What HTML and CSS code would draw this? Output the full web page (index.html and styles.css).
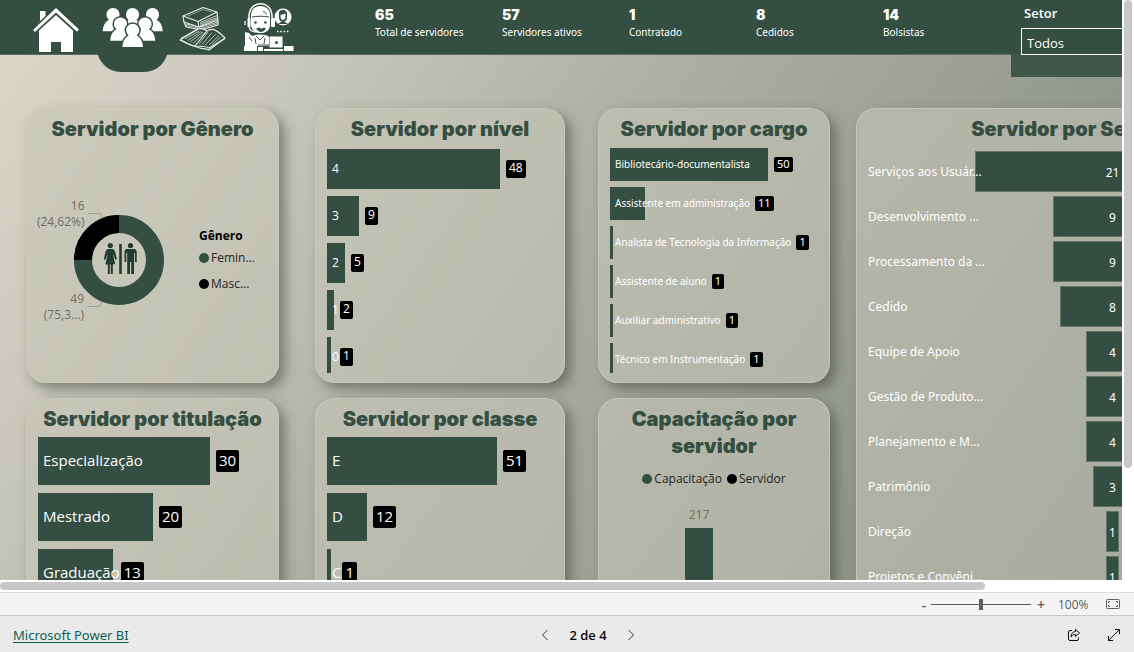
FILE: index.html
```html
<!DOCTYPE html>
<html lang="pt-BR">
<head>
<meta charset="utf-8">
<title>Servidores</title>
<link rel="stylesheet" href="styles.css">
</head>
<body>
<div class="viewport">
  <main class="report">
    <header class="header">
      <nav class="tabs">
        <a class="tab" href="#inicio" aria-label="Início">
          <svg viewBox="28 0 61 54" width="61" height="54"><g fill="#fff"><path d="M33 30 56 8l23 21.500-2 2.200L56 12.500 35 32z"/><path d="M40 11h5.500v5L40 21z"/><path d="M39 30.500 56 15l17 15.500V52H61V42H51v10H39z"/></g></svg>
        </a>
        <a class="tab tab-active" href="#servidores" aria-label="Servidores">
          <svg viewBox="97 0 71 54" width="71" height="54">
            <defs><g id="person"><path d="M-10.300 16.800C-10 11-7.500 7-4 5.300a6.600 6.600 0 1 1 8 0C7.500 7 10 11 10.300 16.800z"/></g></defs>
            <g fill="#fff" stroke="#344e41" stroke-width="3" paint-order="stroke"><use href="#person" x="113" y="14.500"/><use href="#person" x="152.500" y="14.500"/><use href="#person" x="132.500" y="14.500"/><use href="#person" x="120.500" y="24"/><use href="#person" x="145" y="24"/><use href="#person" x="132.700" y="30.200"/></g></svg>
        </a>
        <a class="tab" href="#acervo" aria-label="Acervo">
          <svg viewBox="176 0 58 54" width="58" height="54">
            <g fill="#344e41" stroke="#e6ebe8" stroke-width="1.200" stroke-linejoin="round">
              <path d="M184 22l2 5 15 3 17-5v-4l-16-4z"/><path d="M186 24l15 3 17-5M186 25.500l15 3 17-5" fill="none" stroke-width=".8"/>
              <path d="M183 16 203 7.500 217 12l1 8-19 7-15-5z"/><path d="M183 16l15 5.500L217 12M198 21.500l1 5.500" fill="none"/><path d="M200 22.500l17-7M200 24l17-6.500M200 25.500l18-7" fill="none" stroke-width=".8"/><path d="M188 16l15-6.500 9 2.500" fill="none" stroke-width=".5"/>
              <path d="M180 40l18-11c4-1 6 0 9 2 4-3 8-3 18 7l-16 12c-3-2-7-1-9-2-5-1-12-4-20-8z"/>
              <path d="M207 31l-12 15M181 38.500l17-9.500M225 38.500 209 48c-3-2-8-2-14-2-4 0-9-3-14-6" fill="none"/>
              <path d="M185 39l14-8M188 40.500l13-9M190 42l13-10M193 43.500l12-11M199 44l9-12M202 44.500l10-12M205 45l11-11M209 45l10-9.500M212 44.500l9-7.500" fill="none" stroke-width=".7"/>
            </g></svg>
        </a>
        <a class="tab" href="#atendimento" aria-label="Atendimento">
          <svg viewBox="242 0 54 54" width="54" height="54">
            <circle cx="283" cy="17" r="8.500" fill="#fff"/>
            <path d="M279 12c2-3 7-3 8 1v5c0 2-2 4-4 4s-4-2-4-4zM278 24l3-2h4l3 2" fill="#344e41"/><path d="M280.500 15l5-1.500v3c0 2-1 3.500-2.500 3.500s-2.500-1.500-2.500-3.500z" fill="#fff"/>
            <path d="M249 18C248-1 273-1 272 18" fill="none" stroke="#fff" stroke-width="1.500"/>
            <path d="M251 15c0-12 19-12 19 0v10c0 4-3 7-7 8h-5c-4-1-7-4-7-8z" fill="#fff"/>
            <path d="M252 17c4-1 13-1 17 0M263 11.500c2 .5 3 1.500 3.500 3" fill="none" stroke="#344e41"/>
            <circle cx="255.500" cy="22.500" r="1.300" fill="#344e41"/><circle cx="265.500" cy="22.500" r="1.300" fill="#344e41"/>
            <rect x="247.500" y="18" width="3" height="9" rx="1" fill="#fff"/><rect x="271" y="18" width="4" height="9" rx="1" fill="#fff"/>
            <path d="M245 21v4M249 27c1 4 4 5 7 5" fill="none" stroke="#fff" stroke-width="1.200"/>
            <path d="M256 29c2-2 4-2 5 0 2-2 4-1 5-1-1 3-4 4-6 4z" fill="#344e41"/>
            <path d="M245 32l4 1 3 3c4-2 14-2 17 1v9h-24z" fill="#fff"/>
            <path d="M249 37l3 4M256 36l4 4 4-4M255 38l1 6M265 38l-1 6" stroke="#344e41" fill="none"/>
            <rect x="269.500" y="36.500" width="13" height="11" fill="#fff"/><circle cx="276.500" cy="42.500" r="1.500" fill="#344e41"/>
            <path d="M244 46h13v5h-13zM284 46h9.500v5H284zM258 47h5v4h-5zM264 49h19v2h-19z" fill="#fff"/><path d="M258 45h11" stroke="#344e41"/>
            <path d="M277 31.500h12" stroke="#fff" stroke-width="1.500" stroke-dasharray="1.500 1.800"/></svg>
        </a>
      </nav>
      <dl class="kpis">
        <div class="kpi"><dd>65</dd><dt>Total de servidores</dt></div>
        <div class="kpi"><dd>57</dd><dt>Servidores ativos</dt></div>
        <div class="kpi"><dd>1</dd><dt>Contratado</dt></div>
        <div class="kpi"><dd>8</dd><dt>Cedidos</dt></div>
        <div class="kpi"><dd>14</dd><dt>Bolsistas</dt></div>
      </dl>
      <div class="filter">
        <label for="setor">Setor</label>
        <select id="setor"><option>Todos</option></select>
      </div>
    </header>

    <div class="board">
      <div class="column column-a">
        <section class="card">
          <h2>Servidor por Gênero</h2>
          <div class="gender">
            <svg class="donut" viewBox="37 190 130 140" width="130" height="140">
              <g fill="none" stroke-width="18"><circle cx="118" cy="260" r="36" stroke="#344e41"/><path d="M82 260a36 36 0 0 1 36-36" stroke="#000"/></g>
              <g fill="none" stroke="#a09f94"><path d="M87.500 213.500h12l2 5M86 306.500h12l3-5"/></g>
              <g class="donut-text" text-anchor="end"><text x="83.500" y="210">16</text><text x="83.500" y="226">(24,62%)</text><text x="83" y="303">49</text><text x="83" y="319">(75,3...)</text></g>
              <g fill="#213d30"><circle cx="109.300" cy="245.500" r="2.600"/><path d="M106.500 249h5.600l1.800 2 2 8-1.500.8-2.600-6.500 2.400 11h-2.400V274h-2v-9.500h-1V274h-2v-9.500h-2.400l2.400-11-2.600 6.500-1.500-.8 2-8z"/><path d="M118.200 244h2.600v30h-2.600z"/><circle cx="129.500" cy="245.500" r="2.600"/><path d="M125 249h9l1.700 2v11h-1.800v-9h-.9v21h-2.800v-12h-1.200v12h-2.800v-21h-.9v9h-1.800v-11z"/></g>
            </svg>
            <div class="legend">
              <strong>Gênero</strong>
              <span class="key">Femin...</span>
              <span class="key key-black">Masc...</span>
            </div>
          </div>
        </section>
        <section class="card">
          <h2>Servidor por titulação</h2>
          <div class="chart chart-large">
            <div class="row"><div class="lead"><i style="width:172px"></i><span>Especialização</span></div><b>30</b></div>
            <div class="row"><div class="lead"><i style="width:115px"></i><span>Mestrado</span></div><b>20</b></div>
            <div class="row"><div class="lead"><i style="width:75px"></i><span>Graduação</span></div><b>13</b></div>
          </div>
        </section>
      </div>
      <div class="column column-b">
        <section class="card">
          <h2>Servidor por nível</h2>
          <div class="chart chart-medium">
            <div class="row"><div class="lead"><i style="width:173px"></i><span>4</span></div><b>48</b></div>
            <div class="row"><div class="lead"><i style="width:32px"></i><span>3</span></div><b>9</b></div>
            <div class="row"><div class="lead"><i style="width:18px"></i><span>2</span></div><b>5</b></div>
            <div class="row"><div class="lead"><i style="width:7px"></i><span>1</span></div><b>2</b></div>
            <div class="row"><div class="lead"><i style="width:4px"></i><span>0</span></div><b>1</b></div>
          </div>
        </section>
        <section class="card">
          <h2>Servidor por classe</h2>
          <div class="chart chart-large">
            <div class="row"><div class="lead"><i style="width:170px"></i><span>E</span></div><b>51</b></div>
            <div class="row"><div class="lead"><i style="width:40px"></i><span>D</span></div><b>12</b></div>
            <div class="row"><div class="lead"><i style="width:4px"></i><span>C</span></div><b>1</b></div>
          </div>
        </section>
      </div>
      <div class="column column-c">
        <section class="card">
          <h2>Servidor por cargo</h2>
          <div class="chart chart-small">
            <div class="row"><div class="lead"><i style="width:158px"></i><span>Bibliotecário-documentalista</span></div><b>50</b></div>
            <div class="row"><div class="lead"><i style="width:35px"></i><span>Assistente em administração</span></div><b>11</b></div>
            <div class="row"><div class="lead"><i style="width:3px"></i><span>Analista de Tecnologia da Informação</span></div><b>1</b></div>
            <div class="row"><div class="lead"><i style="width:3px"></i><span>Assistente de aluno</span></div><b>1</b></div>
            <div class="row"><div class="lead"><i style="width:3px"></i><span>Auxiliar administrativo</span></div><b>1</b></div>
            <div class="row"><div class="lead"><i style="width:3px"></i><span>Técnico em Instrumentação</span></div><b>1</b></div>
          </div>
        </section>
        <section class="card">
          <h2>Capacitação por servidor</h2>
          <div class="legend-row"><span class="key">Capacitação</span><span class="key key-black">Servidor</span></div>
          <div class="vbar"><span>217</span><i></i></div>
        </section>
      </div>
      <section class="card sector">
        <h2>Servidor por Setor</h2>
        <div class="funnel">
          <div class="step"><span>Serviços aos Usuár...</span><b style="width:275px">21</b></div>
          <div class="step"><span>Desenvolvimento ...</span><b style="width:119px">9</b></div>
          <div class="step"><span>Processamento da ...</span><b style="width:119px">9</b></div>
          <div class="step"><span>Cedido</span><b style="width:105px">8</b></div>
          <div class="step"><span>Equipe de Apoio</span><b style="width:53px">4</b></div>
          <div class="step"><span>Gestão de Produto...</span><b style="width:53px">4</b></div>
          <div class="step"><span>Planejamento e M...</span><b style="width:53px">4</b></div>
          <div class="step"><span>Patrimônio</span><b style="width:40px">3</b></div>
          <div class="step"><span>Direção</span><b style="width:13px">1</b></div>
          <div class="step"><span>Projetos e Convêni...</span><b style="width:13px">1</b></div>
        </div>
      </section>
    </div>
  </main>
  <div class="vscroll"><i></i></div>
  <div class="hscroll"><i></i></div>
</div>
<div class="zoombar">
  <button type="button" aria-label="Reduzir">-</button>
  <input type="range" min="0" max="100" value="50" aria-label="Zoom">
  <button type="button" aria-label="Ampliar">+</button>
  <span class="percent">100%</span>
  <button type="button" class="fit" aria-label="Ajustar à página"><svg viewBox="0 0 14 10" width="14" height="10" fill="none" stroke="#605e5c"><rect x=".5" y=".5" width="13" height="9" rx="1"/><path d="M2.500 4V2.500H4M10 2.500h1.500V4M11.500 6v1.500H10M4 7.500H2.500V6"/></svg></button>
</div>
<footer class="footer">
  <a class="brand" href="#powerbi">Microsoft Power BI</a>
  <div class="pager">
    <button type="button" aria-label="Página anterior"><svg viewBox="0 0 8 12" width="8" height="12"><path d="M6.500 1 1.500 6l5 5" fill="none" stroke="#333"/></svg></button>
    <span>2 de 4</span>
    <button type="button" aria-label="Próxima página"><svg viewBox="0 0 8 12" width="8" height="12"><path d="M1.500 1l5 5-5 5" fill="none" stroke="#333"/></svg></button>
  </div>
  <div class="actions">
    <button type="button" aria-label="Compartilhar"><svg viewBox="0 0 14 14" width="14" height="14" fill="none" stroke="#111" stroke-linejoin="round"><path d="M5 2.500H3A1.500 1.500 0 0 0 1.500 4v7A1.500 1.500 0 0 0 3 12.500h7A1.500 1.500 0 0 0 11.500 11V9.500"/><path d="M8.500 1.500l4 3.500-4 3.500v-2C6 6.500 5 7.500 4 9c0-3 1.500-5.300 4.500-5.500z"/></svg></button>
    <button type="button" aria-label="Tela cheia"><svg viewBox="0 0 14 14" width="14" height="14" fill="none" stroke="#111"><path d="M1.500 12.500l11-11M8 1.500h4.500V6M1.500 8v4.500H6"/></svg></button>
  </div>
</footer>
</body>
</html>
```
FILE: styles.css
```css
* { box-sizing: border-box; }
html, body { height: 100%; }
body {
  margin: 0;
  display: flex;
  flex-direction: column;
  overflow: hidden;
  font-family: "Open Sans", "Noto Sans", sans-serif;
  font-size: 12px;
  background: #fff;
}
button { border: 0; padding: 0; background: none; font: inherit; color: inherit; display: flex; align-items: center; justify-content: center; }
i, b { font-style: normal; font-weight: 400; }
svg { display: block; overflow: visible; }

.viewport {
  flex: 1;
  min-height: 0;
  display: grid;
  grid-template: minmax(0, 1fr) 12px / minmax(0, 1fr) 12px;
  overflow: hidden;
}
.report {
  overflow: hidden;
  display: flex;
  flex-direction: column;
  background: linear-gradient(125deg, #dbd9cc 0%, #c4c3b7 26%, #adaea4 47%, #959a8f 75%, #7d857b 100%);
}
.vscroll, .hscroll { background: #fff; padding: 2px; }
.vscroll { padding-top: 0; }
.hscroll { padding-left: 0; grid-column: 1 / -1; }
.vscroll i, .hscroll i { display: block; border-radius: 4px; background: #c8c8c8; }
.vscroll i { width: 8px; height: 81%; }
.hscroll i { height: 8px; width: 87%; }

.header {
  flex: none;
  height: 55px;
  min-width: 1280px;
  display: flex;
  align-items: flex-start;
  background: #344e41;
  border-bottom: 1px solid #5a7064;
}
.tabs { display: flex; gap: 8px; padding-left: 28px; width: 375px; flex: none; }
.tab { display: block; }
.tab-active { height: 72px; background: #344e41; border-radius: 0 0 24px 24px; }
.kpis { display: flex; margin: 0; width: 636px; flex: none; color: #fff; padding-top: 6px; }
.kpi { width: 127px; display: flex; flex-direction: column; }
.kpi dd { margin: 0; font: 900 14px/18px Inter, sans-serif; }
.kpi dt { font: 10px/16px "Noto Sans", sans-serif; }
.filter {
  flex: 1;
  height: 77px;
  padding: 4px 10px;
  color: #fff;
  background: linear-gradient(#344e41 54px, #40574a 54px);
}
.filter label { display: block; padding-left: 3px; height: 24px; line-height: 19px; font-size: 13px; font-weight: 600; }
.filter select {
  appearance: none;
  display: block;
  width: 100%;
  height: 27px;
  padding: 2px 5px 0;
  border: 1px solid #fff;
  border-radius: 0;
  background: none;
  color: #fff;
  font: 13px "Open Sans", sans-serif;
}

.board { display: flex; flex: none; padding: 53px 10px 10px 26px; min-width: 1280px; align-items: flex-start; }
.column { display: grid; grid-template-rows: 275px 310px; gap: 15px; flex: none; }
.column-a { width: 253px; margin-right: 36px; }
.column-b { width: 250px; margin-right: 33px; }
.column-c { width: 232px; margin-right: 26px; }
.card {
  display: flex;
  flex-direction: column;
  min-width: 0;
  padding: 7px 11px 9px;
  border: 1px solid rgba(205, 204, 188, .7);
  border-radius: 20px;
  background: rgba(196, 196, 183, .6);
  box-shadow: 6px 6px 12px rgba(60, 62, 56, .5);
}
.card h2 { margin: 0; text-align: center; color: #344e41; font: 900 20px/27px Inter, sans-serif; }

.gender { flex: 1; display: flex; align-items: center; justify-content: space-between; padding-top: 4px; }
.donut-text { font-size: 12px; fill: #6c6b64; }
.legend { width: 68px; display: flex; flex-direction: column; gap: 10px; }
.legend strong { font-size: 12px; line-height: 16px; margin-bottom: -4px; }
.key { display: flex; align-items: center; gap: 2px; font-size: 12px; line-height: 16px; color: #252423; }
.key::before { content: ""; width: 10px; height: 10px; border-radius: 50%; background: #344e41; }
.key-black::before { background: #000; }

.chart { flex: 1; min-height: 0; overflow: hidden; display: flex; flex-direction: column; color: #fff; }
.row { display: flex; align-items: center; flex: none; }
.lead { display: grid; align-items: center; justify-items: start; height: 100%; }
.lead i { grid-area: 1 / 1; height: 100%; background: #344e41; margin-right: 6px; }
.lead span { grid-area: 1 / 1; padding: 0 1px 2px 5px; white-space: nowrap; }
.row b { background: #000; border-radius: 2px; padding: 0 3px 2px; }
.chart-large { font-size: 15px; gap: 8px; padding-top: 4px; }
.chart-large .row { height: 48px; }
.chart-large .row b { line-height: 20px; }
.chart-medium { font-size: 12px; font-weight: 500; gap: 7px; padding-top: 6px; }
.chart-medium .row { height: 40px; }
.chart-medium .row b { line-height: 16px; font-weight: 500; }
.chart-small { font: 10px "Noto Sans", sans-serif; gap: 6px; padding-top: 5px; }
.chart-small .row { height: 33px; }
.chart-small .lead span { padding-right: 5px; }
.chart-small .row b { line-height: 13px; font-size: 11px; }

.legend-row { display: flex; justify-content: center; gap: 5px; padding-top: 11px; }
.vbar { display: flex; flex-direction: column; align-items: center; width: 178px; flex: 1; color: #6c6b64; padding-top: 20px; font-size: 12px; line-height: 16px; gap: 5px; }
.vbar i { width: 28px; flex: 1; background: #344e41; }

.sector { flex: 1; height: 600px; }
.funnel { display: flex; flex-direction: column; gap: 4px; padding-top: 8px; color: #fff; }
.step { display: grid; grid-template-columns: 107px 275px; align-items: center; height: 41px; font: 12px "Noto Sans", sans-serif; }
.step span { grid-area: 1 / 1; z-index: 1; white-space: nowrap; }
.step b { grid-area: 1 / 2; justify-self: center; height: 41px; line-height: 41px; background: #344e41; border: 1px solid #627567; display: flex; justify-content: center; }

.zoombar {
  flex: none;
  height: 23px;
  display: flex;
  align-items: center;
  justify-content: flex-end;
  background: #f4f4f4;
  border-top: 1px solid #ddd;
  padding-right: 14px;
  color: #605e5c;
  font-size: 14px;
}
.zoombar button { width: 12px; font-weight: 600; }
.zoombar input { appearance: none; width: 100px; height: 11px; margin: 0 4px 0 1px; background: linear-gradient(#605e5c, #605e5c) center / 100% 1px no-repeat; }
.zoombar input::-webkit-slider-thumb { appearance: none; width: 4px; height: 11px; background: #605e5c; }
.zoombar .percent { width: 56px; padding-left: 11px; font-size: 12px; }
.zoombar .fit { width: 14px; margin-left: 3px; }
.footer {
  flex: none;
  height: 37px;
  display: grid;
  grid-template-columns: 1fr auto 1fr;
  align-items: center;
  background: #eaeaea;
  border-top: 1px solid #c8c8c8;
  padding: 2px 13px 0;
  font: 13px "Noto Sans", sans-serif;
}
.brand { color: #0b6158; text-decoration: underline; text-underline-offset: 2px; }
.pager { display: flex; align-items: center; gap: 20px; padding-left: 42px; color: #000; font-weight: 500; }
.actions { display: flex; gap: 26px; justify-content: flex-end; }
```
